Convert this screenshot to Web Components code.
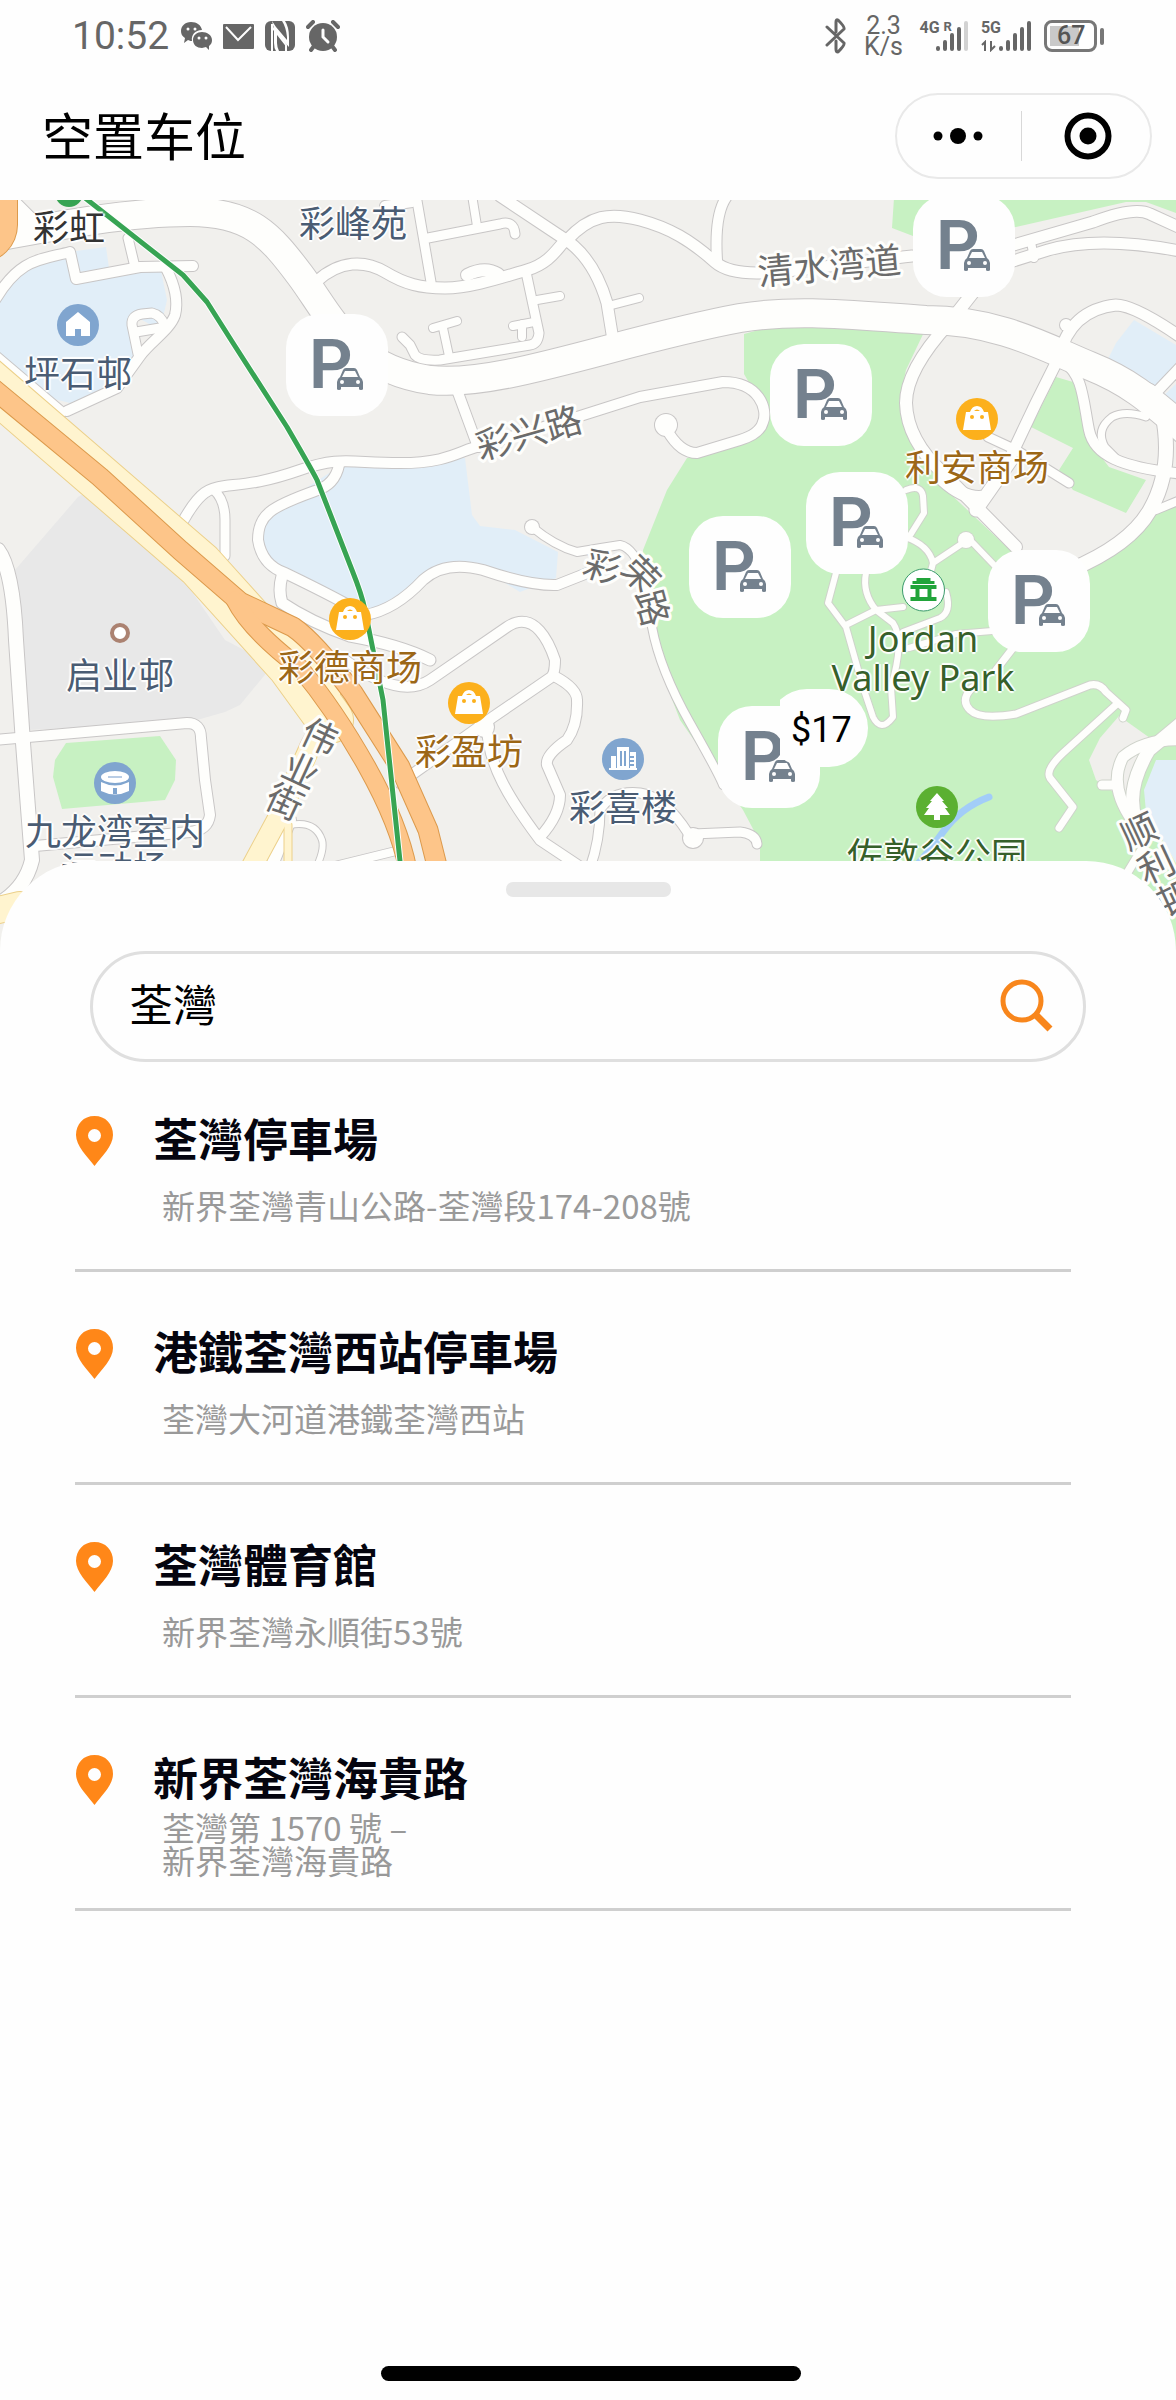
<!DOCTYPE html>
<html lang="zh">
<head>
<meta charset="UTF-8">
<meta name="viewport" content="width=device-width, initial-scale=1.0">
<title>空置车位</title>
<style>
body {
    margin: 0;
    min-height: 100vh;
    display: flex;
    flex-direction: column;
    background-color: #fefefe;
    color: #000;
    font-family: "Noto Sans CJK SC", "Noto Sans", sans-serif;
}

bottom-sheet {
    flex: 1;
}

.latin {
    font-family: "Noto Sans", sans-serif;
}
</style>
</head>
<body>

<status-bar time="10:52" speed="2.3" battery="67"></status-bar>
<nav-bar tit="空置车位"></nav-bar>

<area-map>
    <map-poi x="69" y="193" icon="station" gap="-8" color="#333333">彩虹</map-poi>
    <map-poi x="353" y="193" gap="-12" color="#4a5c73">彩峰苑</map-poi>
    <map-poi x="78" y="325" icon="house" gap="6" color="#4a5c73">坪石邨</map-poi>
    <map-poi x="977" y="419" icon="bag" gap="6" color="#9c6717">利安商场</map-poi>
    <map-poi x="350" y="619" icon="bag" gap="6" color="#9c6717">彩德商场</map-poi>
    <map-poi x="469" y="703" icon="bag" gap="6" color="#9c6717">彩盈坊</map-poi>
    <map-poi x="120" y="633" icon="ring" gap="0" color="#4a5c73">启业邨</map-poi>
    <map-poi x="623" y="759" icon="building" gap="6" color="#4a5c73">彩喜楼</map-poi>
    <map-poi x="115" y="783" icon="stadium" gap="6" color="#4a5c73">九龙湾室内<br>运动场</map-poi>
    <map-poi x="923" y="590" icon="temple" gap="6" color="#36602a"><span class="latin">Jordan<br>Valley Park</span></map-poi>
    <map-poi x="937" y="807" icon="tree" gap="6" color="#36602a">佐敦谷公园</map-poi>

    <map-pin x="337" y="365"></map-pin>
    <map-pin x="964" y="246"></map-pin>
    <map-pin x="821" y="395"></map-pin>
    <map-pin x="857" y="523"></map-pin>
    <map-pin x="740" y="567"></map-pin>
    <map-pin x="1039" y="601"></map-pin>
    <map-pin x="769" y="757" price="$17"></map-pin>
</area-map>

<bottom-sheet>
    <search-box value="荃灣"></search-box>
    <place-item name="荃灣停車場">新界荃灣青山公路-荃灣段174-208號</place-item>
    <place-item name="港鐵荃灣西站停車場">荃灣大河道港鐵荃灣西站</place-item>
    <place-item name="荃灣體育館">新界荃灣永順街53號</place-item>
    <place-item name="新界荃灣海貴路">荃灣第 1570 號 –<br>新界荃灣海貴路</place-item>
</bottom-sheet>

<home-bar></home-bar>

<script>
class StatusBar extends HTMLElement {

    constructor(){
        super();
        this.attachShadow({mode: 'open'});
    }

    connectedCallback(){
        this.render();
    }

    render(){
        this.shadowRoot.innerHTML=`
        <style>
        :host {
            display: flex;
            align-items: center;
            justify-content: space-between;
            height: 72px;
            padding: 0 72px;
            color: #666;
            font-family: Roboto, sans-serif;
        }

        .side {
            display: flex;
            align-items: center;
            gap: 12px;
        }

        .time {
            font-size: 39px;
            line-height: 44px;
        }

        .left {
            gap: 11px;
        }

        .speed {
            display: flex;
            flex-direction: column;
            align-items: center;
            width: 48px;
            font-size: 25px;
            line-height: 21px;
        }

        .net {
            display: grid;
            grid-template-columns: auto auto;
            font-size: 16px;
            line-height: 16px;
            font-weight: 700;
        }

        .net sup {
            font-size: 13px;
            line-height: 13px;
            vertical-align: top;
        }

        .net .bars {
            grid-row: 1 / 3;
            grid-column: 2;
            margin-left: -2px;
        }

        .net.wide .bars {
            margin-left: -16px;
        }

        .net .tag {
            grid-column: 1;
            white-space: nowrap;
        }

        .net .arrows {
            grid-column: 1;
            grid-row: 2;
            margin-top: 4px;
        }

        .battery {
            display: flex;
            align-items: center;
            gap: 3px;
        }

        .cell {
            box-sizing: border-box;
            width: 53px;
            height: 32px;
            border: 3px solid #777;
            border-radius: 8px;
            padding: 3px;
        }

        .level {
            display: block;
            height: 20px;
            padding-left: 7px;
            background: linear-gradient(90deg, #c9c9c9 70%, transparent 70%);
            font-size: 25px;
            line-height: 20px;
            font-weight: 500;
            color: #555;
        }

        .cap {
            width: 4px;
            height: 17px;
            border-radius: 2px;
            background-color: #777;
        }
        </style>

        <div class="side left">
            <span class="time">${this.getAttribute('time')}</span>
            <svg width="32" height="30" viewBox="0 0 32 30" fill="#666">
                <path d="M11 1C5 1 1 5 1 10c0 3 1 5 4 7l-1 5 4-3c2 1 3 1 4 1-1-6 3-11 10-11C21 4 17 1 11 1z"/>
                <path d="M22 11c-5 0-9 3-9 8s4 8 9 8l4-1 3 3v-4c2-2 3-3 3-6 0-5-5-8-10-8z"/>
                <g fill="#fefefe"><circle cx="8" cy="8" r="1.5"/><circle cx="15" cy="8" r="1.5"/><circle cx="19" cy="17" r="1.5"/><circle cx="26" cy="17" r="1.5"/></g>
            </svg>
            <svg width="31" height="30" viewBox="0 0 31 30">
                <rect x="0" y="3" width="31" height="25" rx="1" fill="#666"/>
                <path d="M3 6L15 19L28 6" fill="none" stroke="#fefefe" stroke-width="2"/>
            </svg>
            <svg width="30" height="30" viewBox="0 0 30 30">
                <rect width="30" height="30" rx="6" fill="#666"/>
                <path d="M7 3V30M7 6L21 24V30" fill="none" stroke="#fefefe" stroke-width="2"/>
                <path d="M7 0L11 6L22 19V16Q21 6 17 0H20Q24 6 24 16V26L12 13V22Q12 26 14 30H11Q9 27 9 22V8Z" fill="#fefefe"/>
            </svg>
            <svg width="34" height="32" viewBox="0 0 34 32">
                <circle cx="17" cy="17" r="14" fill="#666"/>
                <path d="M2 7L7 2M32 7L27 2M5 30L8 26M29 30L26 26" stroke="#666" stroke-width="4" stroke-linecap="round"/>
                <path d="M17 10V17L22 22" fill="none" stroke="#fefefe" stroke-width="3" stroke-linecap="round"/>
            </svg>
        </div>

        <div class="side">
            <svg width="24" height="36" viewBox="0 0 24 36" fill="none" stroke="#666" stroke-width="3" stroke-linecap="round" stroke-linejoin="round">
                <path d="M3 9L20 25Q21 27 14 34Q12 34 12 31V23M3 27L20 11Q21 9 14 2Q12 1 12 4V14"/>
            </svg>
            <div class="speed"><span>${this.getAttribute('speed')}</span><span>K/s</span></div>
            <div class="net wide">
                <span class="tag">4G <sup>R</sup></span>
                <svg class="bars" width="33" height="32" viewBox="0 0 33 32" stroke="#666" stroke-width="4" stroke-linecap="round">
                    <path d="M2 28V29M9 22V29M16 15V29M23 9V29"/><path d="M30 3V29" stroke="#d2d2d2"/>
                </svg>
            </div>
            <div class="net">
                <span class="tag">5G</span>
                <svg class="bars" width="33" height="32" viewBox="0 0 33 32" stroke="#666" stroke-width="4" stroke-linecap="round">
                    <path d="M2 28V29M9 22V29M16 15V29M23 9V29M30 3V29"/>
                </svg>
                <svg class="arrows" width="16" height="12" viewBox="0 0 16 12" fill="none" stroke="#666" stroke-width="2">
                    <path d="M1 5L4 2V11M10 1V10L14 6"/>
                </svg>
            </div>
            <div class="battery">
                <div class="cell"><span class="level">${this.getAttribute('battery')}</span></div>
                <div class="cap"></div>
            </div>
        </div>
        `;
    }
}

customElements.define('status-bar', StatusBar)


class NavBar extends HTMLElement {

    constructor(){
        super();
        this.attachShadow({mode: 'open'});
    }

    connectedCallback(){
        this.render();
    }

    render(){
        this.shadowRoot.innerHTML=`
        <style>
        :host {
            display: block;
        }

        header {
            display: flex;
            align-items: center;
            justify-content: space-between;
            height: 128px;
            padding: 0 24px 0 42px;
        }

        h1 {
            margin: 0;
            padding-bottom: 4px;
            font-size: 51px;
            line-height: 60px;
            font-weight: 400;
        }

        .capsule {
            box-sizing: border-box;
            display: flex;
            align-items: center;
            width: 257px;
            height: 86px;
            border: 2px solid #e9e9e9;
            border-radius: 43px;
        }

        button {
            flex: 1;
            display: flex;
            align-items: center;
            justify-content: center;
            height: 100%;
            margin: 0;
            padding: 0;
            border: 0;
            background: none;
        }

        .line + button {
            padding-left: 4px;
        }

        .line {
            width: 1px;
            height: 50px;
            background-color: #d8d8d8;
        }
        </style>

        <header>
            <h1>${this.getAttribute('tit')}</h1>
            <div class="capsule">
                <button aria-label="更多">
                    <svg width="52" height="48" viewBox="0 0 52 48"><circle cx="5" cy="24" r="4.5"/><circle cx="25" cy="24" r="8"/><circle cx="45" cy="24" r="4.5"/></svg>
                </button>
                <div class="line"></div>
                <button aria-label="关闭">
                    <svg width="48" height="48" viewBox="0 0 48 48"><circle cx="24" cy="24" r="20.5" fill="none" stroke="#000" stroke-width="6"/><circle cx="24" cy="24" r="8.5"/></svg>
                </button>
            </div>
        </header>
        `;
    }
}

customElements.define('nav-bar', NavBar)


// Filled ground: [colour, points]
const areas = [
    ['#e1eef8', 'M0 295L30 262L72 250L77 280L160 266L167 300L160 330L135 316L140 350L118 392L70 403L50 398L0 358Z'],
    ['#e1eef8', 'M76 251L106 247L109 268L79 272Z'],
    ['#e1eef8', 'M340 466L465 458L472 515L480 526L515 530L558 552L556 578L520 592L500 580L450 567L420 578L390 606L367 612L335 598L290 575L262 550L265 520L300 492Z'],
    ['#e8e8e8', 'M78 497Q88 490 110 496L160 545L225 640L273 665L240 705L225 712L190 722L28 730L15 570Z'],
    ['#c7f1c2', 'M66 743L160 736L176 760L175 780L165 800L62 809L53 777L55 760Z'],
    ['#c7f1c2', 'M744 334L776 325L926 328L906 370L899 403L919 450L943 487L1010 550L1086 567L1136 535L1156 513L1176 497V950H760V843L752 827L743 810L717 773L680 720L657 660L645 610L643 550L667 490L687 458L750 440L765 410L744 374Z'],
    ['#c7f1c2', 'M894 198L892 228L913 236L1016 227L1126 202L1146 202L1176 213V198Z'],
    ['#c7f1c2', 'M1056 377L1073 382L1081 407L1086 437L1109 467L1146 480L1126 513L1073 490L1059 470L1073 448L1031 427Z'],
    ['#e1eef8', 'M1134 320L1176 345V367L1150 393L1106 363L1116 343Z'],
    ['#e1eef8', 'M1180 380L1159 400L1180 418Z'],
    ['#f0efec', 'M1119 716L1150 738L1125 800L1096 780L1089 760L1100 738Z'],
    ['#e1eef8', 'M1180 760H1156L1144 790L1146 812L1180 870Z'],
    ['#c7f1c2', 'M1133 880L1180 950V990L1130 900Z']
];

// White streets: [width, path]
const roads = [
    [28, 'M-10 238C60 225 130 212 190 212S270 235 300 275S350 368 430 380C500 388 620 340 740 318C800 308 860 316 926 320C1000 320 1050 350 1090 366C1130 382 1150 400 1185 430'],
    [22, 'M-5 190L30 225'],
    [10, 'M-5 300C20 258 40 260 70 252L76 279L140 267L193 266'],
    [9, 'M128 238L134 263'],
    [10, 'M166 268Q180 295 175 315C170 330 150 342 140 356L117 388L67 411'],
    [9, 'M138 354L132 325Q131 316 142 314L152 313Q161 315 165 326M136 332L160 328'],
    [12, 'M-5 357L60 412'],
    [11, 'M317 281C340 260 365 260 385 272S420 288 445 288S500 278 527 270S560 242 567 240C590 215 610 212 640 220S690 240 715 262S800 268 912 256'],
    [11, 'M1010 262L1048 250Q1100 235 1185 252'],
    [11, 'M1010 246L1093 222Q1135 206 1150 214L1185 230'],
    [8, 'M1031 242L1034 258'],
    [9, 'M416 195L431 282'],
    [8, 'M472 195L477 226'],
    [9, 'M428 238L500 224Q514 220 515 234'],
    [10, 'M385 206L412 202'],
    [11, 'M500 196L560 236Q593 255 607 303L613 340'],
    [8, 'M612 305L639 298'],
    [12, 'M467 275Q485 266 498 274'],
    [9, 'M526 272L539 333Q538 344 530 345L440 360Q420 361 415 355L410 345L402 337'],
    [8, 'M537 300L560 296M433 328L457 321M443 328L449 356M513 326L534 322M522 324V337'],
    [10, 'M728 195Q714 212 717 260'],
    [10, 'M457 390L478 447'],
    [10, 'M182 523C200 490 210 488 225 486S260 484 300 470S350 463 400 463S460 450 480 446L577 417L640 397L723 382C760 382 768 410 763 422Q760 434 740 440L697 453Q680 453 667 430'],
    [22, 'M666 425V425'],
    [9, 'M214 490Q225 500 225 520V556'],
    [10, 'M339 465Q335 485 315 491C270 507 258 515 258 540Q262 565 285 573Q345 602 365 615Q395 610 423 580Q445 560 483 570Q530 586 557 585L595 570'],
    [11, 'M282 576Q278 590 282 603Q310 622 350 636Q400 645 430 660'],
    [10, 'M345 660Q400 700 430 680L507 627C535 608 550 645 555 660Q555 675 550 678L493 717L400 783'],
    [20, 'M484 727V727'],
    [10, 'M487 727C488 765 510 800 540 840L585 870'],
    [10, 'M554 676Q577 688 577 700Q578 725 567 740Q545 755 547 765L560 795Q560 815 540 837'],
    [9, 'M590 868Q600 840 600 810Q612 790 640 793Q665 797 688 833M693 834L740 832Q756 834 757 844'],
    [20, 'M693 838V838'],
    [14, 'M532 527V527'],
    [8, 'M532 527Q555 546 577 552Q600 548 620 545Q635 548 645 580T652 627Q660 670 690 723T723 785'],
    [14, 'M-2 550Q13 570 16 640L23 743L32 860Q25 890 -5 906'],
    [10, 'M-5 740L187 723Q201 723 201 738L205 780L210 815Q208 830 190 832L35 846'],
    [12, 'M270 870L290 820'],
    [6, 'M290 825Q315 820 322 840Q325 850 315 870'],
    [8, 'M335 866L400 850'],
    [12, 'M975 290L949 323Q906 370 906 403Q907 440 943 473L1016 547'],
    [14, 'M1070 570Q1130 545 1150 510T1165 430T1140 390'],
    [11, 'M1009 460L1036 403L1059 357Q1070 310 1116 305Q1135 305 1185 340'],
    [12, 'M1066 325V325'],
    [13, 'M943 480Q965 500 984 497M1011 460L976 510'],
    [9, 'M988 437L1016 450L1069 483'],
    [10, 'M1064 362C1083 375 1083 400 1089 430C1094 455 1120 468 1185 474'],
    [7, 'M1146 417Q1125 410 1112 417Q1095 430 1105 447L1118 460'],
    [10, 'M1185 362L1149 400'],
    [8, 'M1185 498L1156 510']
];

// Footpaths and lanes inside the park
const paths = [
    [6, 'M906 490Q921 484 923 496L924 513L909 537M905 537Q929 545 933 563L963 543M973 543L996 567M933 563L930 575'],
    [16, 'M966 540V540'],
    [6, 'M836 573L828 603L846 627L863 687L873 717Q881 733 893 717L891 687Q905 640 893 623L876 610Q862 593 866 573M846 625L876 610L903 607M946 592Q952 612 940 618L903 632M909 648L956 634L992 631'],
    [7, 'M1013 648L996 670M972 688Q960 700 970 710Q980 720 1016 714L1090 685Q1100 683 1106 692L1126 710L1123 718M1118 703L1063 753Q1045 770 1050 778L1073 807L1059 828'],
    [13, 'M1185 720L1149 750Q1125 790 1136 820'],
    [11, 'M1185 740Q1146 738 1123 757Q1108 785 1132 820'],
    [9, 'M1102 785H1116'],
    [8, 'M1143 847L1123 880']
];

const yellows = [
    [46, 'M-20 375L90 470L200 565L290 665L330 720'],
    [20, 'M330 683V710L310 747L277 820L250 870'],
    [7, 'M288 825V870'],
    [26, 'M-10 912L20 905']
];

const oranges = [
    [19, 'M-10 386L100 477L180 550L240 602L293 627Q315 642 353 693L400 767L428 830L438 870'],
    [17, 'M235 600Q250 630 300 668Q335 710 367 767T408 870'],
    [74, 'M-20 190V225']
];

const metro = 'M80 194L183 275L207 302L233 343L287 427Q312 470 317 480L352 570Q362 595 365 610L383 700L402 880';

function strokes(list, casing, fill){
    const draw = (color, extra) => list.map(([w, d]) => `<path d="${d}" stroke="${color}" stroke-width="${w + extra}"/>`).join('');
    return draw(casing, 2) + draw(fill, 0);
}

class AreaMap extends HTMLElement {

    constructor(){
        super();
        this.attachShadow({mode: 'open'});
    }

    connectedCallback(){
        this.render();
    }

    render(){
        this.shadowRoot.innerHTML=`
        <style>
        :host {
            display: block;
            position: relative;
            height: 760px;
            overflow: hidden;
            background-color: #f1f0ed;
        }

        svg {
            display: block;
            width: 100%;
            height: 100%;
        }

        text {
            font-size: 36px;
            fill: #6b6b6b;
            stroke: #fefefc;
            stroke-width: 6px;
            stroke-linejoin: round;
            paint-order: stroke;
            text-anchor: middle;
            dominant-baseline: central;
        }
        </style>

        <svg viewBox="0 200 1176 760" preserveAspectRatio="xMidYMin slice">
            ${areas.map(([color, d]) => `<path d="${d}" fill="${color}"/>`).join('')}
            <g fill="none" stroke-linecap="round" stroke-linejoin="round">
                <path d="M989 797Q960 808 943 832T912 870" stroke="#a2cdf8" stroke-width="7"/>
                ${strokes(paths, '#cfd3cb', '#fefefc')}
                ${strokes(roads, '#c8c6c6', '#fefefc')}
                ${strokes(yellows, '#ecd08a', '#fff4cf')}
                ${strokes(oranges, '#dc9a4c', '#fdc589')}
                <path d="${metro}" stroke="#fefefe" stroke-width="7"/>
                <path d="${metro}" stroke="#37a453" stroke-width="5"/>
            </g>
            <g transform="translate(0 -3)">
                <text transform="translate(829 266) rotate(-5)">清水湾道</text>
                <text transform="translate(528 433) rotate(-16)">彩兴路</text>
                <text transform="translate(603 567) rotate(18)">彩</text>
                <text transform="translate(643 576) rotate(45)">荣</text>
                <text transform="translate(655 610) rotate(75)">路</text>
                <text transform="translate(321 737) rotate(25)">伟</text>
                <text transform="translate(302 771) rotate(25)">业</text>
                <text transform="translate(286 802) rotate(25)">街</text>
                <text transform="translate(1138 832) rotate(-25)">顺</text>
                <text transform="translate(1155 866) rotate(-25)">利</text>
                <text transform="translate(1172 900) rotate(-25)">邨</text>
            </g>
        </svg>
        <slot></slot>
        `;
    }
}

customElements.define('area-map', AreaMap)


const disc = (color, shape) => `<circle cx="22" cy="22" r="21" fill="${color}"/>${shape}`;

const poiIcons = {
    station: '<circle cx="22" cy="22" r="14" fill="#37a453"/>',
    house: disc('#80a5cf', '<path d="M22 9L34 19V33H25V26H19V33H10V19Z" fill="#fff"/>'),
    bag: disc('#fcb01c', '<path d="M11 15H15Q17 9 22 9T29 15H33L36 33H8Z" fill="#fff"/><g fill="#fcb01c"><circle cx="17" cy="20" r="2"/><circle cx="27" cy="20" r="2"/><path d="M19 14Q22 11 25 14Z"/></g>'),
    building: disc('#80a5cf', '<path d="M10 19H15V32H10ZM16 10H28V32H16ZM29 15H35V32H29ZM8 31H36V33H8Z" fill="#fff"/><path d="M20 14V29M24 14V29M29 20H33M29 24H33M29 28H33" stroke="#80a5cf" stroke-width="2"/>'),
    stadium: disc('#80a5cf', '<ellipse cx="22" cy="16" rx="14" ry="6" fill="#fff"/><path d="M8 21Q22 28 36 21V30Q22 37 8 30Z" fill="#fff"/><path d="M15 16H29" stroke="#b9cde5" stroke-width="2"/><rect x="20" y="27" width="4" height="6" fill="#80a5cf"/>'),
    ring: '<circle cx="22" cy="22" r="8" fill="#fff" stroke="#ab8271" stroke-width="4"/>',
    temple: '<circle cx="22" cy="22" r="21" fill="#fff" stroke="#3b9a6b" stroke-width="1"/><path d="M15 10H29V13H33V16H11V13H15ZM9 17H35V21H9ZM9 29H35V33H9Z" fill="#21a43a"/><path d="M16 20V31M28 20V31" stroke="#21a43a" stroke-width="4"/>',
    tree: disc('#5bb031', '<path d="M22 8L29 16H27L33 23H30L35 30H25V35H19V30H9L14 23H11L17 16H15Z" fill="#fff"/>')
};

class MapPoi extends HTMLElement {

    constructor(){
        super();
        this.attachShadow({mode: 'open'});
    }

    connectedCallback(){
        this.render();
    }

    render(){
        const icon = poiIcons[this.getAttribute('icon')] || '';
        this.shadowRoot.innerHTML=`
        <style>
        :host {
            position: absolute;
            left: calc(50% + ${this.getAttribute('x') - 588}px);
            top: ${this.getAttribute('y') - 222}px;
            transform: translateX(-50%);
            display: flex;
            flex-direction: column;
            align-items: center;
            color: ${this.getAttribute('color')};
            font-size: 36px;
            line-height: 37px;
            text-align: center;
            white-space: nowrap;
            text-shadow: 2px 0 1px #fff, -2px 0 1px #fff, 0 2px 1px #fff, 0 -2px 1px #fff;
        }

        span {
            margin-top: ${this.getAttribute('gap')}px;
            position: relative;
        }
        </style>

        <svg width="44" height="44" viewBox="0 0 44 44">${icon}</svg>
        <span><slot></slot></span>
        `;
    }
}

customElements.define('map-poi', MapPoi)


class MapPin extends HTMLElement {

    constructor(){
        super();
        this.attachShadow({mode: 'open'});
    }

    connectedCallback(){
        this.render();
    }

    render(){
        const price = this.getAttribute('price');
        this.shadowRoot.innerHTML=`
        <style>
        :host {
            position: absolute;
            left: calc(50% + ${this.getAttribute('x') - 588 - 51}px);
            top: ${this.getAttribute('y') - 251}px;
        }

        button {
            display: flex;
            align-items: center;
            width: 102px;
            height: 102px;
            margin: 0;
            padding: 0 0 0 23px;
            border: 0;
            border-radius: 34px;
            background-color: #fefefe;
            color: #74818e;
            font-family: Roboto, sans-serif;
            font-size: 68px;
            font-weight: 600;
            line-height: 68px;
        }

        button svg {
            flex: none;
            margin: 28px 0 0 -17px;
        }

        .price {
            position: absolute;
            left: 50px;
            top: -17px;
            box-sizing: border-box;
            width: 100px;
            height: 78px;
            padding-left: 23px;
            border-radius: 39px;
            background-color: #fefefe;
            font-family: Roboto, sans-serif;
            font-size: 36px;
            line-height: 82px;
            color: #000;
            clip-path: inset(0 0 0 12px);
        }
        </style>

        <button>P<svg width="28" height="24" viewBox="0 0 28 24">
            <path d="M4 10L7 3Q8 1 10 1H18Q20 1 21 3L24 10Q27 12 27 15V22Q27 23 25 23T23 22V20H5V22Q5 23 3 23T1 22V15Q1 12 4 10Z" fill="#74818e"/>
            <path d="M6 10L9 4H19L22 10Z" fill="#fefefe"/>
            <circle cx="6" cy="15" r="2" fill="#fefefe"/><circle cx="22" cy="15" r="2" fill="#fefefe"/>
        </svg></button>
        ${price ? `<span class="price">${price}</span>` : ''}
        `;
    }
}

customElements.define('map-pin', MapPin)


class BottomSheet extends HTMLElement {

    constructor(){
        super();
        this.attachShadow({mode: 'open'});
    }

    connectedCallback(){
        this.render();
    }

    render(){
        this.shadowRoot.innerHTML=`
        <style>
        :host {
            display: block;
            position: relative;
            margin-top: -99px;
            padding: 21px 75px 0;
            border-radius: 90px 90px 0 0;
            background-color: #fefefe;
        }

        .grip {
            width: 165px;
            height: 15px;
            margin: 0 auto 54px;
            border-radius: 7px;
            background-color: #e7e7e7;
        }
        </style>

        <div class="grip"></div>
        <slot></slot>
        `;
    }
}

customElements.define('bottom-sheet', BottomSheet)


class SearchBox extends HTMLElement {

    constructor(){
        super();
        this.attachShadow({mode: 'open'});
    }

    connectedCallback(){
        this.render();
    }

    render(){
        this.shadowRoot.innerHTML=`
        <style>
        :host {
            display: block;
            margin: 0 15px;
        }

        form {
            box-sizing: border-box;
            display: flex;
            align-items: center;
            height: 111px;
            padding: 0 29px 0 36px;
            border: 3px solid #dfdfdf;
            border-radius: 56px;
        }

        input {
            flex: 1;
            min-width: 0;
            margin: 0;
            padding: 0 0 8px;
            border: 0;
            outline: 0;
            background: none;
            color: #000;
            font-family: "Noto Sans CJK TC", sans-serif;
            font-size: 44px;
            line-height: 52px;
        }

        button {
            margin: 0;
            padding: 0;
            border: 0;
            background: none;
            line-height: 0;
        }
        </style>

        <form>
            <input type="text" aria-label="搜尋" value="${this.getAttribute('value')}">
            <button type="button" aria-label="搜尋">
                <svg width="54" height="56" viewBox="0 0 54 56" fill="none" stroke="#f8861c">
                    <circle cx="22" cy="22" r="19" stroke-width="5"/>
                    <path d="M35 35L50 50" stroke-width="7"/>
                </svg>
            </button>
        </form>
        `;
    }
}

customElements.define('search-box', SearchBox)


class PlaceItem extends HTMLElement {

    constructor(){
        super();
        this.attachShadow({mode: 'open'});
    }

    connectedCallback(){
        this.render();
    }

    render(){
        this.shadowRoot.innerHTML=`
        <style>
        :host {
            display: block;
            margin-right: 30px;
            border-bottom: 3px solid #cfcfcf;
            font-family: "Noto Sans CJK TC", sans-serif;
        }

        :host(:first-of-type) {
            margin-top: -3px;
        }

        a {
            display: flex;
            align-items: flex-start;
            gap: 39px;
            padding: 55px 0 31px;
            color: inherit;
            text-decoration: none;
        }

        svg {
            flex: none;
            margin-top: 2px;
        }

        h2 {
            margin: 0 0 10px;
            font-size: 45px;
            line-height: 48px;
            font-weight: 700;
            color: #05050f;
        }

        p {
            display: flex;
            align-items: center;
            min-height: 66px;
            margin: 0;
            padding-left: 9px;
            font-size: 33px;
            line-height: 33px;
            color: #999;
        }
        </style>

        <a href="#">
            <svg width="39" height="50" viewBox="0 0 78 100">
                <path d="M39 0C17 0 2 16 2 38C2 60 24 80 39 100C54 80 76 60 76 38C76 16 61 0 39 0ZM39 26A13 13 0 1 1 39 52A13 13 0 1 1 39 26Z" fill="#ff8718"/>
            </svg>
            <div>
                <h2>${this.getAttribute('name')}</h2>
                <p><span><slot></slot></span></p>
            </div>
        </a>
        `;
    }
}

customElements.define('place-item', PlaceItem)


class HomeBar extends HTMLElement {

    constructor(){
        super();
        this.attachShadow({mode: 'open'});
    }

    connectedCallback(){
        this.render();
    }

    render(){
        this.shadowRoot.innerHTML=`
        <style>
        :host {
            display: flex;
            justify-content: center;
            padding: 20px 0 19px 6px;
        }

        div {
            width: 420px;
            height: 15px;
            border-radius: 8px;
            background-color: #000;
        }
        </style>

        <div></div>
        `;
    }
}

customElements.define('home-bar', HomeBar)
</script>
</body>
</html>
